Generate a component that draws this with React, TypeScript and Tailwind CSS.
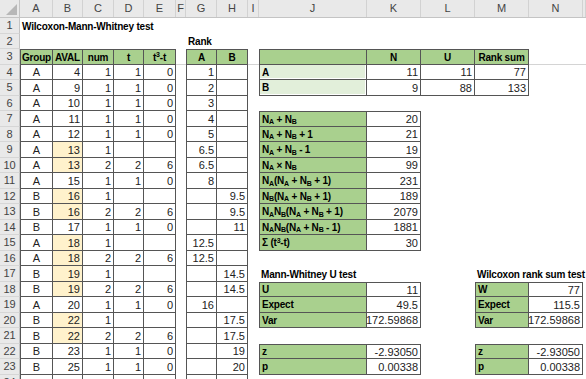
import React from "react";
import clsx from "clsx";

type C = { v?: React.ReactNode; al?: "l" | "c" | "r"; b?: boolean; bg?: string; bd?: string };

const COLS: { k: string; w: string }[] = [
  { k: "A", w: "w-[33px]" },
  { k: "B", w: "w-[30px]" },
  { k: "C", w: "w-[31px]" },
  { k: "D", w: "w-[30px]" },
  { k: "E", w: "w-[32px]" },
  { k: "F", w: "w-[10px]" },
  { k: "G", w: "w-[31px]" },
  { k: "H", w: "w-[31px]" },
  { k: "I", w: "w-[11px]" },
  { k: "J", w: "w-[108px]" },
  { k: "K", w: "w-[54px]" },
  { k: "L", w: "w-[54px]" },
  { k: "M", w: "w-[54px]" },
  { k: "N", w: "w-[54px]" },
  { k: "O", w: "flex-1 min-w-0" },
];
const LETTERS = COLS.map((c) => c.k);

const GREEN = "bg-[#a9d08e]";
const LGREEN = "bg-[#e2efda] shadow-[inset_-1px_-1px_0_0_#ffffff]";
const YELLOW = "bg-[#fff2cc]";

const cells: Record<string, C> = {};
const set = (ref: string, c: C) => {
  cells[ref] = { ...cells[ref], ...c };
};
const box = (c1: string, c2: string, r1: number, r2: number) => {
  const i1 = LETTERS.indexOf(c1);
  const i2 = LETTERS.indexOf(c2);
  for (let r = r1; r <= r2; r++) {
    for (let i = i1; i <= i2; i++) {
      const parts = ["border-r border-b border-[#555555]"];
      if (i === i1) parts.push("border-l");
      if (r === r1) parts.push("border-t");
      set(LETTERS[i] + r, { bd: parts.join(" ") });
    }
  }
};

const N = (s: string) => (
  <>
    N<sub className="text-[7px]">{s}</sub>
  </>
);

// Title & labels
set("A1", { v: "Wilcoxon-Mann-Whitney test", b: true, al: "l" });
set("G2", { v: "Rank", b: true, al: "l" });

// Left table
box("A", "E", 3, 24);
const hdr: [string, React.ReactNode][] = [
  ["A", "Group"],
  ["B", "AVAL"],
  ["C", "num"],
  ["D", "t"],
  ["E", (
    <>
      t<sup className="text-[7px]">3</sup>-t
    </>
  )],
];
hdr.forEach(([c, v]) => set(c + 3, { v, b: true, al: "c", bg: GREEN }));

// Rank table
box("G", "H", 3, 24);
set("G3", { v: "A", b: true, al: "c", bg: GREEN });
set("H3", { v: "B", b: true, al: "c", bg: GREEN });

type Row = [string, number, number, number | null, number | null, number | null, number | null, boolean?];
const data: Row[] = [
  ["A", 4, 1, 1, 0, 1, null],
  ["A", 9, 1, 1, 0, 2, null],
  ["A", 10, 1, 1, 0, 3, null],
  ["A", 11, 1, 1, 0, 4, null],
  ["A", 12, 1, 1, 0, 5, null],
  ["A", 13, 1, null, null, 6.5, null, true],
  ["A", 13, 2, 2, 6, 6.5, null, true],
  ["A", 15, 1, 1, 0, 8, null],
  ["B", 16, 1, null, null, null, 9.5, true],
  ["B", 16, 2, 2, 6, null, 9.5, true],
  ["B", 17, 1, 1, 0, null, 11],
  ["A", 18, 1, null, null, 12.5, null, true],
  ["A", 18, 2, 2, 6, 12.5, null, true],
  ["B", 19, 1, null, null, null, 14.5, true],
  ["B", 19, 2, 2, 6, null, 14.5, true],
  ["A", 20, 1, 1, 0, 16, null],
  ["B", 22, 1, null, null, null, 17.5, true],
  ["B", 22, 2, 2, 6, null, 17.5, true],
  ["B", 23, 1, 1, 0, null, 19],
  ["B", 25, 1, 1, 0, null, 20],
];
data.forEach((d, i) => {
  const r = i + 4;
  set("A" + r, { v: d[0], al: "c" });
  set("B" + r, { v: d[1], bg: d[7] ? YELLOW : undefined });
  set("C" + r, { v: d[2] });
  if (d[3] !== null) set("D" + r, { v: d[3] });
  if (d[4] !== null) set("E" + r, { v: d[4] });
  if (d[5] !== null) set("G" + r, { v: d[5] });
  if (d[6] !== null) set("H" + r, { v: d[6] });
});

// N / U / Rank sum table
box("J", "M", 3, 5);
set("J3", { bg: GREEN });
set("K3", { v: "N", b: true, al: "c", bg: GREEN });
set("L3", { v: "U", b: true, al: "c", bg: GREEN });
set("M3", { v: "Rank sum", b: true, al: "c", bg: GREEN });
set("J4", { v: "A", b: true, al: "l", bg: LGREEN });
set("J5", { v: "B", b: true, al: "l", bg: LGREEN });
set("K4", { v: 11 });
set("L4", { v: 11 });
set("M4", { v: 77 });
set("K5", { v: 9 });
set("L5", { v: 88 });
set("M5", { v: 133 });

// Formula table
box("J", "K", 7, 15);
const formulas: [React.ReactNode, string][] = [
  [<>{N("A")} + {N("B")}</>, "20"],
  [<>{N("A")} + {N("B")} + 1</>, "21"],
  [<>{N("A")} + {N("B")} - 1</>, "19"],
  [<>{N("A")} × {N("B")}</>, "99"],
  [<>{N("A")}({N("A")} + {N("B")} + 1)</>, "231"],
  [<>{N("B")}({N("A")} + {N("B")} + 1)</>, "189"],
  [<>{N("A")}{N("B")}({N("A")} + {N("B")} + 1)</>, "2079"],
  [<>{N("A")}{N("B")}({N("A")} + {N("B")} - 1)</>, "1881"],
  [<>Σ (t<sup className="text-[7px]">3</sup>-t)</>, "30"],
];
formulas.forEach(([l, v], i) => {
  set("J" + (i + 7), { v: l, b: true, al: "l", bg: GREEN });
  set("K" + (i + 7), { v });
});

// Mann-Whitney
set("J17", { v: "Mann-Whitney U test", b: true, al: "l" });
box("J", "K", 18, 20);
box("J", "K", 22, 23);
const mw: [number, string, string][] = [
  [18, "U", "11"],
  [19, "Expect", "49.5"],
  [20, "Var", "172.59868"],
  [22, "z", "-2.93050"],
  [23, "p", "0.00338"],
];
mw.forEach(([r, l, v]) => {
  set("J" + r, { v: l, b: true, al: "l", bg: GREEN });
  set("K" + r, { v });
});

// Wilcoxon rank sum
set("M17", { v: "Wilcoxon rank sum test", b: true, al: "l" });
box("M", "N", 18, 20);
box("M", "N", 22, 23);
const wr: [number, string, string][] = [
  [18, "W", "77"],
  [19, "Expect", "115.5"],
  [20, "Var", "172.59868"],
  [22, "z", "-2.93050"],
  [23, "p", "0.00338"],
];
wr.forEach(([r, l, v]) => {
  set("M" + r, { v: l, b: true, al: "l", bg: GREEN });
  set("N" + r, { v });
});

// freeze pane line under row 3
["F", "I", "N", "O"].forEach((c) => set(c + 3, { bd: "border-b border-[#d4d4d4]" }));

function Cell({ w, c }: { w: string; c?: C }) {
  const al =
    c?.al === "c" ? "justify-center" : c?.al === "l" ? "justify-start pl-[2px]" : "justify-end pr-[2px]";
  return (
    <div
      className={clsx(
        "h-full shrink-0 flex items-center pt-[1px] whitespace-nowrap leading-none",
        w,
        al,
        c?.bg,
        c?.bd,
        c?.b ? "font-bold text-[10px] tracking-[-0.2px] text-black" : "text-[11px] text-[#222]"
      )}
    >
      {c?.v !== undefined && <span>{c.v}</span>}
    </div>
  );
}

export default function App() {
  const rows = Array.from({ length: 24 }, (_, i) => i + 1);
  return (
    <div className="w-[586px] h-[379px] overflow-hidden bg-white font-['Liberation_Sans',Arial,sans-serif]">
      {/* column header */}
      <div className="flex h-[18px] bg-[#e9e9e9] border-b border-[#c4c4c4]">
        <div className="w-[20px] h-full shrink-0 border-r border-[#c4c4c4] relative">
          <svg className="absolute right-[2px] bottom-[2px]" width="11" height="11" viewBox="0 0 11 11">
            <polygon points="11,0 11,11 0,11" fill="#b7b7b7" />
          </svg>
        </div>
        {COLS.map((c) => (
          <div
            key={c.k}
            className={clsx(
              "h-full shrink-0 flex items-center justify-center text-[11px] text-[#444] border-r border-[#d2d2d2]",
              c.w
            )}
          >
            {c.k !== "O" ? c.k : ""}
          </div>
        ))}
      </div>
      {rows.map((r) => (
        <div key={r} className={clsx("flex", r % 2 === 1 ? "h-[16px]" : "h-[15px]")}>
          <div className="w-[20px] h-full shrink-0 flex items-center justify-center text-[11px] text-[#444] bg-[#e9e9e9] border-r border-[#c4c4c4] border-b border-b-[#d6d6d6]">
            {r}
          </div>
          {COLS.map((c) => (
            <Cell key={c.k} w={c.w} c={cells[c.k + r]} />
          ))}
        </div>
      ))}
    </div>
  );
}
